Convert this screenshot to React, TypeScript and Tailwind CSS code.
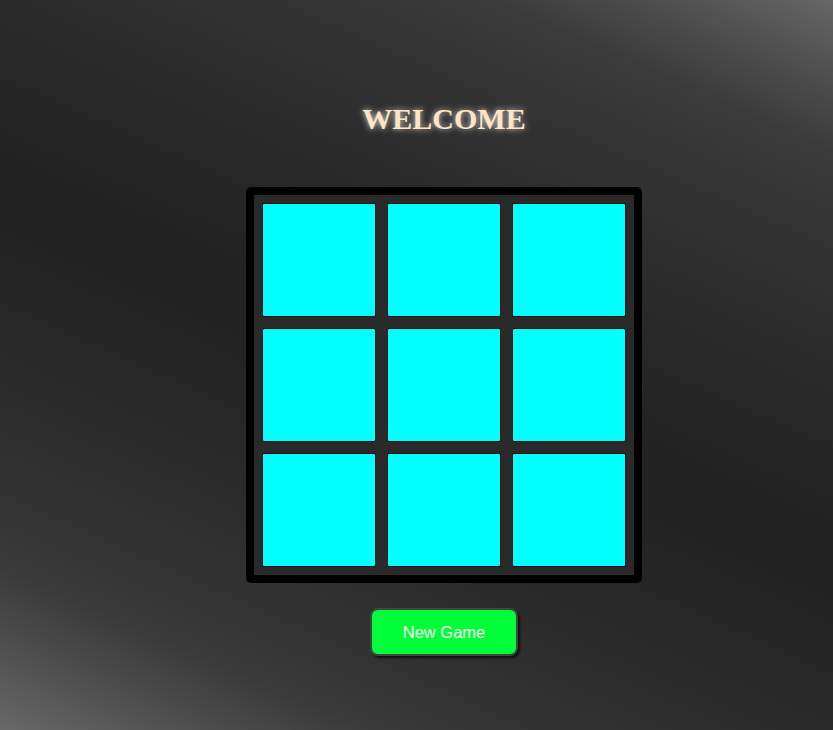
import React, { useState } from 'react';

const bg =
  'bg-[linear-gradient(24deg,#686868_0%,#4b4b4b_9%,#3a3a3a_15%,#323232_22%,#2b2b2b_32%,#222222_46%,#222222_52%,#2c2c2c_68%,#333333_78%,#3b3b3b_86%,#4c4c4c_92%,#666666_100%)]';

const App: React.FC = () => {
  const [cells, setCells] = useState<string[]>(Array(9).fill(''));
  const [turn, setTurn] = useState<'X' | 'O'>('X');

  const play = (i: number) => {
    if (cells[i]) return;
    const next = [...cells];
    next[i] = turn;
    setCells(next);
    setTurn(turn === 'X' ? 'O' : 'X');
  };

  const reset = () => {
    setCells(Array(9).fill(''));
    setTurn('X');
  };

  return (
    <div className={`min-h-screen w-full ${bg}`}>
      <div className="flex flex-col items-center pl-[55px] pt-[104px]">
        <h1
          className="text-[30px] leading-[30px] font-bold text-[#ffe4c4] [text-shadow:0_0_6px_rgba(255,255,255,0.85)]"
          style={{ fontFamily: '"Liberation Serif", "Times New Roman", serif' }}
        >
          WELCOME
        </h1>

        <div className="mt-[53px] grid grid-cols-[repeat(3,114px)] gap-[11px] rounded-[5px] border-[8px] border-black bg-[#2a2a2a] p-[8px]">
          {cells.map((v, i) => (
            <button
              key={i}
              onClick={() => play(i)}
              className="flex h-[114px] w-[114px] items-center justify-center rounded-[2px] border border-[#111] bg-[#00ffff] text-5xl font-bold text-black"
              style={{ fontFamily: '"Liberation Sans", Arial, sans-serif' }}
            >
              {v}
            </button>
          ))}
        </div>

        <button
          onClick={reset}
          className="mt-[25px] h-[48px] w-[148px] rounded-[8px] border-2 border-[#444] bg-[#00ff37] text-[16.5px] text-white shadow-[2px_2px_2px_#111]"
          style={{ fontFamily: '"Liberation Sans", Arial, sans-serif' }}
        >
          New Game
        </button>
      </div>
    </div>
  );
};

export default App;
